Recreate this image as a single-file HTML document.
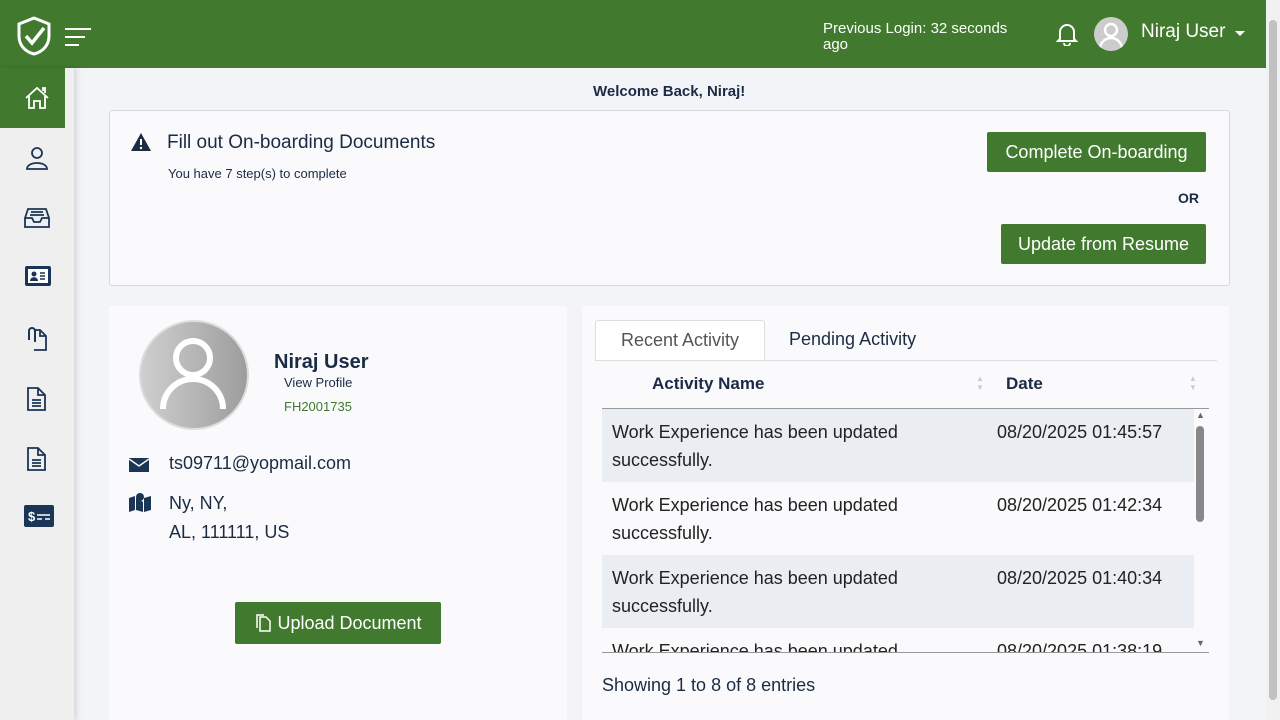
<!DOCTYPE html>
<html><head><meta charset="utf-8"><style>
*{box-sizing:border-box;margin:0;padding:0}
body{width:1280px;height:720px;overflow:hidden;background:#f3f4f7;font-family:"Liberation Sans",sans-serif;color:#1b2b44;position:relative}
.top{position:absolute;left:0;top:0;width:1266px;height:68px;background:#417a2e}
.side{position:absolute;left:0;top:68px;width:74px;height:652px;background:#efefef;box-shadow:2px 0 6px rgba(0,0,0,.15)}
.home{position:absolute;left:0;top:68px;width:65px;height:60px;background:#417a2e}
.ic{position:absolute;left:24px}
.scroll{position:absolute;right:0;top:0;width:14px;height:720px;background:#f1f1f1}
.btn{position:absolute;background:#417a2e;color:#fff;font-size:18px;border-radius:2px;display:flex;align-items:center;justify-content:center}
.card{position:absolute;background:#fafafc}
.row{position:absolute;left:602px;width:592px;height:73px;font-size:18px;color:#222}
.row span{position:absolute;top:9px;line-height:28px}
</style></head><body>
<div class="top"></div>
<svg style="position:absolute;left:17px;top:16px" width="34" height="40" viewBox="0 0 34 40"><path d="M17 2 L32 8 V20 C32 30 25 36 17 38 C9 36 2 30 2 20 V8 Z" fill="none" stroke="#fff" stroke-width="3"/><path d="M9 20 L15 27 L27 12" fill="none" stroke="#fff" stroke-width="3.5"/></svg>
<svg style="position:absolute;left:65px;top:28px" width="27" height="18"><path d="M0 1H26M0 9H20M0 17H14" stroke="#fff" stroke-width="2"/></svg>
<div style="position:absolute;left:823px;top:21px;color:#fff;font-size:15px;line-height:16px;width:200px">Previous Login: 32 seconds<br>ago</div>
<svg style="position:absolute;left:1056px;top:22px" width="22" height="24" viewBox="0 0 22 24"><path d="M4 17V10a7 7 0 0 1 14 0v7l2 2H2z M8 21a3 3 0 0 0 6 0" fill="none" stroke="#fff" stroke-width="2"/></svg>
<div style="position:absolute;left:1094px;top:17px;width:34px;height:34px;border-radius:50%;background:#ccc;overflow:hidden"><svg width="34" height="34"><circle cx="17" cy="13" r="6" fill="none" stroke="#fff" stroke-width="2.5"/><path d="M6 32a11 11 0 0 1 22 0" fill="none" stroke="#fff" stroke-width="2.5"/></svg></div>
<div style="position:absolute;left:1141px;top:21px;color:#fff;font-size:19px">Niraj User</div>
<div style="position:absolute;left:1235px;top:31px;border:5px solid transparent;border-top-color:#fff"></div>
<div class="side"></div><div class="home"></div>
<svg class="ic" style="top:86px" width="26" height="24" viewBox="0 0 26 24"><path d="M2 12 L13 2 L24 12 M5 10V22H10V15H16V22H21V10 M19 5V2h2v5" fill="none" stroke="#fff" stroke-width="1.8"/></svg>
<svg class="ic" style="top:146px" width="26" height="24"><circle cx="13" cy="7" r="5" fill="none" stroke="#1b3556" stroke-width="1.8"/><path d="M3 23c0-8 20-8 20 0z" fill="none" stroke="#1b3556" stroke-width="1.8"/></svg>
<svg class="ic" style="top:206px" width="26" height="24"><path d="M4 3H22L25 12V21H1V12Z M1 12H8L10 16H16L18 12H25 M7 6H19M6 9H20" fill="none" stroke="#1b3556" stroke-width="1.8"/></svg>
<svg class="ic" style="top:265px" width="28" height="22"><rect x="1" y="1" width="26" height="20" rx="2" fill="#1b3556"/><rect x="4" y="4" width="20" height="14" fill="#fff"/><circle cx="10" cy="9" r="2.5" fill="#1b3556"/><path d="M6 16c0-5 8-5 8 0z" fill="#1b3556"/><path d="M16 8h5M16 11h5M16 14h5" stroke="#1b3556" stroke-width="1.5"/></svg>
<svg class="ic" style="top:326px" width="26" height="26"><path d="M10 4H16L22 10V24H10 M16 4V10H22" fill="none" stroke="#1b3556" stroke-width="1.8"/><path d="M5 14V5a3 3 0 0 1 6 0v11" fill="none" stroke="#1b3556" stroke-width="2"/></svg>
<svg class="ic" style="top:386px" width="26" height="26"><path d="M4 2H14L21 9V24H4Z M14 2V9H21 M8 14H17M8 17H17M8 20H17" fill="none" stroke="#1b3556" stroke-width="1.8"/></svg>
<svg class="ic" style="top:446px" width="26" height="26"><path d="M4 2H14L21 9V24H4Z M14 2V9H21 M8 14H17M8 17H17M8 20H17" fill="none" stroke="#1b3556" stroke-width="1.8"/></svg>
<svg class="ic" style="top:505px" width="30" height="22"><rect x="0" y="0" width="30" height="22" rx="2" fill="#1b3556"/><text x="4" y="16" fill="#fff" font-size="13" font-family="Liberation Sans" font-weight="bold">$</text><path d="M13 10h13M13 14h5M21 14h5" stroke="#fff" stroke-width="1.5"/></svg>
<div class="scroll"></div>
<div style="position:absolute;left:593px;top:83px;font-size:15px;font-weight:bold;color:#1b2b44">Welcome Back, Niraj!</div>
<div class="card" style="left:109px;top:110px;width:1121px;height:176px;border:1px solid #d8d8d8;border-radius:3px"></div>
<svg style="position:absolute;left:130px;top:132px" width="22" height="20"><path d="M11 1L21 19H1Z" fill="#1b2b44"/><path d="M11 7v6" stroke="#fff" stroke-width="2"/><circle cx="11" cy="16" r="1.2" fill="#fff"/></svg>
<div style="position:absolute;left:167px;top:132px;font-size:19px">Fill out On-boarding Documents</div>
<div style="position:absolute;left:168px;top:166px;font-size:13px">You have 7 step(s) to complete</div>
<div class="btn" style="left:987px;top:132px;width:219px;height:40px">Complete On-boarding</div>
<div style="position:absolute;left:1178px;top:190px;font-size:14px;font-weight:bold">OR</div>
<div class="btn" style="left:1001px;top:224px;width:205px;height:40px">Update from Resume</div>
<div class="card" style="left:109px;top:306px;width:458px;height:414px"></div>
<div style="position:absolute;left:139px;top:320px;width:110px;height:110px;border-radius:50%;background:linear-gradient(90deg,#cfcfcf,#9d9d9d);border:2px solid #ddd"><svg width="106" height="106"><circle cx="52" cy="36" r="17" fill="none" stroke="#fff" stroke-width="6"/><path d="M22 87a30 30 0 0 1 60 0" fill="none" stroke="#fff" stroke-width="6"/></svg></div>
<div style="position:absolute;left:274px;top:351px;font-size:20px;font-weight:bold">Niraj User</div>
<div style="position:absolute;left:284px;top:375px;font-size:13px">View Profile</div>
<div style="position:absolute;left:284px;top:399px;font-size:13px;color:#417a2e">FH2001735</div>
<svg style="position:absolute;left:129px;top:458px" width="20" height="14"><rect width="20" height="14" fill="#1b3556"/><path d="M0 1L10 8L20 1" fill="none" stroke="#fafafc" stroke-width="1.5"/></svg>
<div style="position:absolute;left:169px;top:453px;font-size:18px">ts09711@yopmail.com</div>
<svg style="position:absolute;left:129px;top:492px" width="22" height="20"><path d="M0 6L6 4V18L0 20Z M15 6L22 4V18L15 20Z M7 6V18L14 20V10" fill="#1b3556"/><circle cx="11" cy="5" r="4" fill="#1b3556"/></svg>
<div style="position:absolute;left:169px;top:489px;font-size:18px;line-height:29px">Ny, NY,<br>AL, 111111, US</div>
<div class="btn" style="left:235px;top:602px;width:206px;height:42px"><svg width="18" height="20" style="margin-right:5px"><path d="M6 4H12L16 8V18H6Z M3 15V2H10" fill="none" stroke="#fff" stroke-width="1.5"/></svg>Upload Document</div>
<div class="card" style="left:582px;top:306px;width:647px;height:414px"></div>
<div style="position:absolute;left:595px;top:320px;width:170px;height:41px;background:#fff;border:1px solid #ddd;border-bottom:none;border-radius:3px 3px 0 0;font-size:18px;color:#555;text-align:center;padding-top:9px">Recent Activity</div>
<div style="position:absolute;left:789px;top:329px;font-size:18px">Pending Activity</div>
<div style="position:absolute;left:595px;top:360px;width:622px;height:1px;background:#ddd"></div>
<div style="position:absolute;left:652px;top:374px;font-size:17px;font-weight:bold">Activity Name</div>
<div style="position:absolute;left:1006px;top:374px;font-size:17px;font-weight:bold">Date</div>
<div style="position:absolute;left:976px;top:374px;font-size:8px;color:#ccc;line-height:9px">▲<br>▼</div>
<div style="position:absolute;left:1189px;top:374px;font-size:8px;color:#ccc;line-height:9px">▲<br>▼</div>
<div style="position:absolute;left:602px;top:408px;width:607px;height:1px;background:#999"></div>
<div class="row" style="top:409px;background:#eaedf2"><span style="left:10px">Work Experience has been updated<br>successfully.</span><span style="left:395px">08/20/2025 01:45:57</span></div>
<div class="row" style="top:482px"><span style="left:10px">Work Experience has been updated<br>successfully.</span><span style="left:395px">08/20/2025 01:42:34</span></div>
<div class="row" style="top:555px;background:#eaedf2"><span style="left:10px">Work Experience has been updated<br>successfully.</span><span style="left:395px">08/20/2025 01:40:34</span></div>
<div class="row" style="top:628px;height:24px;overflow:hidden"><span style="left:10px">Work Experience has been updated</span><span style="left:395px">08/20/2025 01:38:19</span></div>
<div style="position:absolute;left:1196px;top:426px;width:8px;height:96px;background:#888;border-radius:4px"></div>
<div style="position:absolute;left:1196px;top:410px;font-size:9px;color:#666">▲</div>
<div style="position:absolute;left:1196px;top:638px;font-size:9px;color:#666">▼</div>
<div style="position:absolute;left:602px;top:652px;width:607px;height:1px;background:#999"></div>
<div style="position:absolute;left:602px;top:675px;font-size:18px">Showing 1 to 8 of 8 entries</div>
<div style="position:absolute;right:3px;top:20px;width:8px;height:680px;background:#c1c1c1;border-radius:4px"></div>
</body></html>
